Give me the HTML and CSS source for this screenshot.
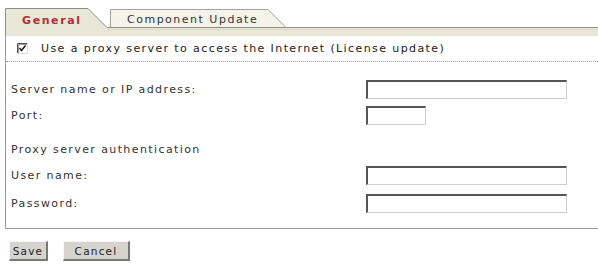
FILE: index.html
```html
<!DOCTYPE html>
<html>
<head>
<meta charset="utf-8">
<link rel="stylesheet" href="styles.css">
</head>
<body>
<div class="tabstrip">
  <svg class="tabshape" width="593" height="28" viewBox="0 0 593 28">
    <rect x="0" y="19" width="593" height="9" fill="#e9e8d8"/>
    <path d="M105.5,19.5 V1.5 H263 L281,19.5" fill="#f4f3ea" stroke="#a3a39a"/>
    <line x1="102" y1="19.5" x2="593" y2="19.5" stroke="#8e8e86"/>
    <line x1="102" y1="21.5" x2="593" y2="21.5" stroke="#dcdbc9"/>
    <path d="M0.5,28 V0.5 H83 L102,19.5 V28 Z" fill="#e9e8d8" stroke="none"/>
    <path d="M0.5,28 V0.5 H83 L102,19.5" fill="none" stroke="#8e8e86"/>
  </svg>
  <div class="tablabels">
    <span class="tab tab-active">General</span>
    <span class="tab tab-other">Component Update</span>
  </div>
</div>
<div class="panel">
  <div class="check-row">
    <svg class="checkbox" width="11" height="11" viewBox="0 0 11 11">
      <rect x="0" y="0" width="11" height="11" fill="#fff"/>
      <path d="M0.5,11 V0.5 H11" fill="none" stroke="#555" stroke-width="1"/>
      <path d="M1.5,10 V1.5 H10" fill="none" stroke="#999" stroke-width="1"/>
      <path d="M10.5,0 V10.5 H0" fill="none" stroke="#ddd" stroke-width="1"/>
      <path d="M2.5,5 L4.5,7.5 L8.5,2.5" fill="none" stroke="#222" stroke-width="1.6"/>
    </svg>
    <span class="check-label">Use a proxy server to access the Internet (License update)</span>
  </div>
  <div class="fields">
    <div class="row r1"><label class="lbl">Server name or IP address:</label><input class="inp wide" type="text"></div>
    <div class="row r2"><label class="lbl">Port:</label><input class="inp narrow" type="text"></div>
    <div class="row r3"><span class="lbl">Proxy server authentication</span></div>
    <div class="row r4"><label class="lbl">User name:</label><input class="inp wide" type="text"></div>
    <div class="row r5"><label class="lbl">Password:</label><input class="inp wide" type="password"></div>
  </div>
</div>
<div class="buttons">
  <button class="btn btn-save">Save</button>
  <button class="btn btn-cancel">Cancel</button>
</div>
</body>
</html>
```

FILE: styles.css
```css
html, body {
  margin: 0;
  padding: 0;
  background: #ffffff;
  font-family: "DejaVu Sans", Verdana, sans-serif;
  color: #333;
}

.tabstrip {
  display: grid;
  margin-left: 5px;
  padding-top: 8px;
  width: 593px;
}

.tabshape,
.tablabels {
  grid-area: 1 / 1;
}

.tabshape {
  display: block;
}

.tablabels {
  display: flex;
  align-items: flex-start;
  height: 28px;
}

.tab {
  display: block;
  line-height: 14px;
  white-space: nowrap;
  font-size: 11px;
}

.tab-active {
  width: 88px;
  padding-left: 17px;
  padding-top: 6px;
  font-weight: bold;
  letter-spacing: 1.6px;
  color: #b03034;
}

.tab-other {
  padding-left: 17px;
  padding-top: 5px;
  letter-spacing: 1.5px;
  color: #333;
}

.panel {
  margin-left: 5px;
  border-left: 1px solid #9a9a9a;
  border-bottom: 1px solid #9a9a9a;
  width: 592px;
  padding-bottom: 15px;
}

.check-row {
  display: flex;
  align-items: center;
  height: 25px;
  padding-left: 11px;
  border-bottom: 1px dotted #a0a0a0;
}

.checkbox {
  display: block;
  margin-right: 13px;
  margin-top: -1px;
}

.check-label {
  font-size: 11px;
  letter-spacing: 1.4px;
  color: #222;
}

.fields {
  display: flex;
  flex-direction: column;
  padding-left: 5px;
}

.row {
  display: flex;
  align-items: center;
  height: 19px;
}

.r1 { margin-top: 18px; }
.r2 { margin-top: 7px; }
.r3 { margin-top: 15px; }
.r4 { margin-top: 7px; }
.r5 { margin-top: 9px; }

.lbl {
  width: 355px;
  font-size: 11px;
  letter-spacing: 1.4px;
  color: #333;
}

.inp {
  box-sizing: border-box;
  height: 19px;
  margin: 0;
  padding: 0 3px;
  background: #fff;
  border-top: 2px solid #555;
  border-left: 2px solid #555;
  border-right: 1px solid #cfcfcf;
  border-bottom: 1px solid #cfcfcf;
  font-family: "DejaVu Sans", sans-serif;
  font-size: 10px;
  outline: none;
}

.wide { width: 201px; }
.narrow { width: 60px; }

.buttons {
  display: flex;
  gap: 15px;
  padding-left: 9px;
  margin-top: 12px;
}

.btn {
  box-sizing: border-box;
  height: 20px;
  margin: 0;
  padding: 0;
  background: #d6d4cf;
  border-top: 1px solid #f6f6f6;
  border-left: 1px solid #f6f6f6;
  border-right: 2px solid #777;
  border-bottom: 2px solid #777;
  font-family: "DejaVu Sans", sans-serif;
  font-size: 10.5px;
  letter-spacing: 1.2px;
  color: #222;
}

.btn-save { width: 39px; }
.btn-cancel { width: 67px; }
```
